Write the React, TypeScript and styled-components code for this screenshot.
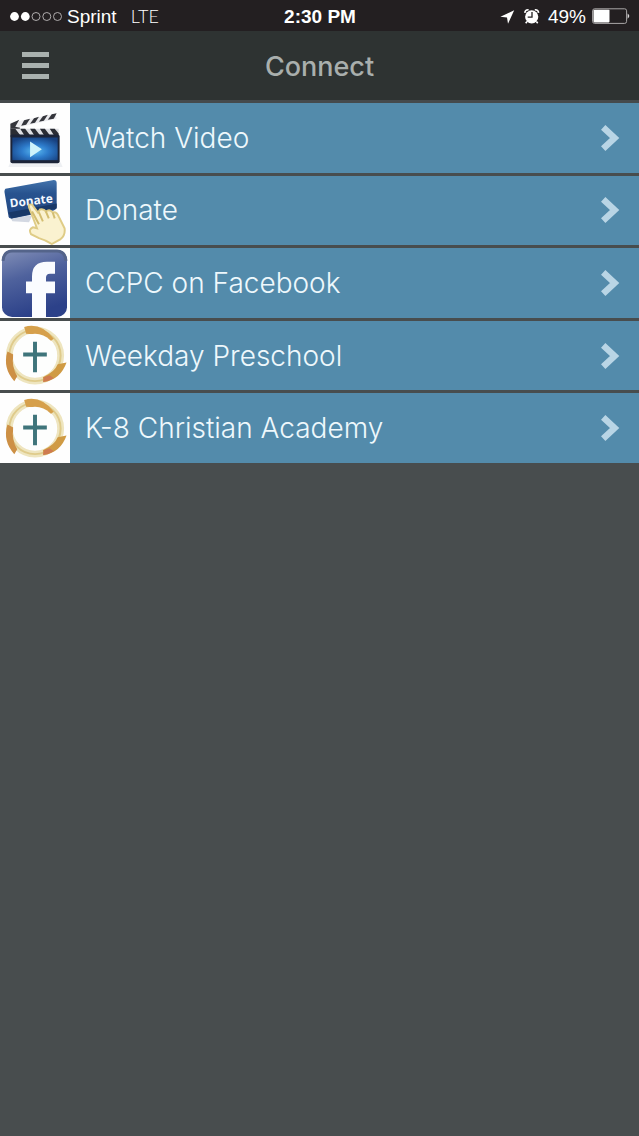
import React from 'react';
import styled, { createGlobalStyle } from 'styled-components';

const GlobalStyle = createGlobalStyle`
  *, *::before, *::after { box-sizing: border-box; }
  body {
    margin: 0;
    background: #484d4e;
    font-family: Inter, "Liberation Sans", sans-serif;
  }
`;

const StatusBar = styled.div`
  display: grid;
  grid-template-columns: 1fr auto 1fr;
  align-items: center;
  height: 31px;
  padding: 2px 9px 0 10px;
  background: #231f21;
  color: #fff;
  font-family: "Liberation Sans", Arial, sans-serif;
  font-size: 19px;
  line-height: 24px;
`;

const StatusGroup = styled.div<{ $end?: boolean }>`
  display: flex;
  align-items: center;
  justify-content: ${(p) => (p.$end ? 'flex-end' : 'flex-start')};
`;

const Carrier = styled.span`
  margin-left: 5px;
`;

const Network = styled.span`
  margin-left: 14px;
  font-family: Lato, "Liberation Sans", sans-serif;
  font-weight: 300;
  font-size: 18px;
  line-height: 20px;
`;

const Clock = styled.time`
  font-weight: 700;
`;

const BatteryLevel = styled.span`
  margin: 0 6px 0 1px;
`;

const NavBar = styled.header`
  display: grid;
  grid-template-columns: 70px 1fr 70px;
  align-items: center;
  height: 72px;
  background: #2e3332;
  border-bottom: 3px solid #454a4c;
`;

const MenuButton = styled.button`
  display: flex;
  justify-content: center;
  padding: 0;
  border: 0;
  background: none;
  cursor: pointer;
`;

const Title = styled.h1`
  margin: 0;
  padding-top: 2px;
  color: #a9afad;
  font-size: 27px;
  line-height: 32px;
  font-weight: 500;
  text-align: center;
`;

const LinkList = styled.ul`
  display: grid;
  grid-auto-rows: 1fr;
  gap: 3px;
  min-height: 360px;
  margin: 0;
  padding: 0;
  list-style: none;
`;

const LinkRow = styled.a`
  display: flex;
  align-items: center;
  height: 100%;
  padding-right: 19px;
  background: #538bab;
  color: #eef8fc;
  font-size: 28px;
  line-height: 32px;
  font-weight: 300;
  text-decoration: none;
`;

const Thumb = styled.span`
  display: flex;
  flex: none;
  align-self: stretch;
  align-items: center;
  width: 70px;
  margin-right: 15px;
  background: #fefefe;

  svg { width: 70px; height: 69px; }
`;

const Label = styled.span`
  flex: 1;
`;

const SignalDots = () => (
  <svg width="52" height="12" viewBox="0 0 52 12" role="img" aria-label="Signal strength">
    <circle cx="4.5" cy="5.5" r="4.4" fill="#fff" />
    <circle cx="15.3" cy="5.5" r="4.4" fill="#fff" />
    {[26, 36.8, 47.5].map((x) => (
      <circle key={x} cx={x} cy="5.5" r="4" fill="none" stroke="#bdbabb" strokeWidth="0.9" />
    ))}
  </svg>
);

const StatusIcons = () => (
  <svg width="47" height="20" viewBox="0 0 47 20" aria-hidden="true">
    <path d="M14.2 3.2 L0.4 9.8 L7 10.4 L8 16.8 Z" fill="#fff" />
    <circle cx="31.7" cy="9.8" r="6.6" fill="#fff" />
    <path d="M24.8 5.9 Q25 2.6 28.6 2.8 M38.6 5.9 Q38.4 2.6 34.8 2.8" fill="none" stroke="#fff" strokeWidth="1.6" />
    <path d="M27 14.5 L25.7 16.2 M36.4 14.5 L37.7 16.2" stroke="#fff" strokeWidth="1.6" />
    <path d="M32 5 V10.2 H27.7" fill="none" stroke="#231f21" strokeWidth="1.3" />
  </svg>
);

const BatteryIcon = () => (
  <svg width="38" height="17" viewBox="0 0 38 17" role="img" aria-label="Battery">
    <rect x="0.6" y="0.8" width="34" height="14.6" rx="2" fill="none" stroke="#aaa7a8" strokeWidth="1" />
    <rect x="1.5" y="1.8" width="16" height="12.6" rx="0.8" fill="#fff" />
    <path d="M35.6 5.4 Q39 8.1 35.6 10.8 Z" fill="#d8d6d7" />
  </svg>
);

const MenuIcon = () => (
  <svg width="27" height="28" viewBox="0 0 27 28" aria-hidden="true">
    <path d="M0 2.500 H27 M0 13.500 H27 M0 24.500 H27" stroke="#a9b1ae" strokeWidth="5" />
  </svg>
);

const Chevron = () => (
  <svg width="20" height="28" viewBox="0 0 20 28" aria-hidden="true">
    <path d="M3.2 3.4 L14.6 14 L3.2 24.600" fill="none" stroke="#b9d5e5" strokeWidth="6.4" />
  </svg>
);

const VideoArt = () => (
  <svg viewBox="0 0 70 70" aria-hidden="true">
    <defs>
      <radialGradient id="screen" cx="50%" cy="60%" r="65%">
        <stop offset="0" stopColor="#5cbcf2" />
        <stop offset="0.45" stopColor="#2d7bcb" />
        <stop offset="1" stopColor="#17407f" />
      </radialGradient>
    </defs>
    <path d="M10 60 H61 L63 65 H8 Z" fill="#eef0f3" />
    <path d="M10 20 L56 11 L57 16 L12 26 Z" fill="#ececef" />
    <g fill="#34353b">
      <path d="M10 21 L19 17 L15 24 L20 25 L18 29 L10 27 Z" />
      <path d="M24 17.500 L30 16 L26 22 L21 23 Z" />
      <path d="M34 15.500 L39 14 L35 20 L30 21 Z" />
      <path d="M43 13.500 L48 12 L44 18 L39 19 Z" />
      <path d="M52 11.500 L57 10.500 L54 16 L48 17 Z" />
    </g>
    <path d="M10 26 H59 V35 H10 Z" fill="#dedfe3" />
    <path d="M10 26 H15 L21 34 H10 Z M20 26 H25 L31 34 H25 Z M30 26 H35 L41 34 H35 Z M40 26 H45 L51 34 H45 Z M50 26 H55 L59 31 V34 H55 Z" fill="#2b2d34" />
    <rect x="10" y="32" width="50" height="29" rx="2" fill="#1c2438" />
    <rect x="12" y="35" width="46" height="23" fill="url(#screen)" />
    <path d="M30 39 L42 47 L30 55 Z" fill="#cdf3fb" />
  </svg>
);

const DonateArt = () => (
  <svg viewBox="0 0 70 70" aria-hidden="true">
    <defs>
      <linearGradient id="card" x1="0" y1="0" x2="0" y2="1">
        <stop offset="0" stopColor="#4374ac" />
        <stop offset="0.35" stopColor="#28538f" />
        <stop offset="1" stopColor="#214681" />
      </linearGradient>
    </defs>
    <path d="M10 42 L32 40 L29 47 L12 46 Z" fill="#d3d8e2" />
    <path d="M5 13 L54 4 Q57 4 57 7 L57 31 Q57 34 54 35 L11 43 Q8 43 8 40 L4 16 Q4 14 5 13 Z" fill="url(#card)" />
    <path d="M8 37 L57 28 L57 33 L11 43 Z" fill="#193867" />
    <text x="10" y="32" transform="rotate(-7 10 32)" fill="#f3f8ff" fontFamily="Open Sans, sans-serif" fontWeight="700" fontSize="12">Donate</text>
    <path d="M29 32 Q28 28 32 29 L38 37 L40 34 Q44 33 46 36 Q50 33 53 37 Q57 36 59 41 L65 53 Q66 60 61 64 L52 69 Q46 65 39 63 L31 59 Q28 54 33 52 L37 53 Z" fill="#faf2d0" stroke="#dfcc86" strokeWidth="2" />
    <path d="M32 36 L39 49 M39 37 L43 46 M46 36 L49 43 M53 37 L55 43" fill="none" stroke="#d3bd70" strokeWidth="2" />
  </svg>
);

const FacebookArt = () => (
  <svg viewBox="0 0 70 70" preserveAspectRatio="none" aria-hidden="true">
    <defs>
      <linearGradient id="tile" x1="0" y1="0" x2="0.3" y2="1">
        <stop offset="0" stopColor="#8390b8" />
        <stop offset="0.45" stopColor="#4f629d" />
        <stop offset="1" stopColor="#2c4189" />
      </linearGradient>
    </defs>
    <rect x="2" y="2" width="65" height="68" rx="10" fill="url(#tile)" />
    <path d="M3 13 Q4 3 12 3 H57 Q65 3 66 13" fill="none" stroke="#54648a" strokeWidth="3" />
    <path d="M32 70 V46 H26 V34 H32 V29 Q32 14 47 14 H55 V26 H50 Q46 26 46 30 V34 H55 V46 H46 V70 Z" fill="#fafcff" />
  </svg>
);

const CrossArt = () => (
  <svg viewBox="0 0 70 70" aria-hidden="true">
    <circle cx="35" cy="35" r="26" fill="none" stroke="#eee5bf" strokeWidth="7" />
    <circle cx="35" cy="35" r="26" fill="none" stroke="#dfcb8b" strokeWidth="2" />
    <path d="M24 6 Q41 1 54 18 L50 21 Q40 13 26 13 Z" fill="#d6a04b" />
    <path d="M7 31 Q2 48 14 61 L17 56 Q11 47 13 34 Z" fill="#cd9045" />
    <path d="M67 42 Q61 59 44 62 L43 57 Q55 52 58 44 Z" fill="#d09b44" />
    <path d="M44 57 L50 55 L54 58 Q49 61 43 62 Z" fill="#cf7b50" />
    <circle cx="35" cy="35" r="22" fill="#fdfefd" />
    <path d="M35 21 V52 M23 34 H47" stroke="#3f757b" strokeWidth="4" />
  </svg>
);

const links = [
  { label: 'Watch Video', href: '#video', Art: VideoArt },
  { label: 'Donate', href: '#donate', Art: DonateArt },
  { label: 'CCPC on Facebook', href: '#facebook', Art: FacebookArt },
  { label: 'Weekday Preschool', href: '#preschool', Art: CrossArt },
  { label: 'K-8 Christian Academy', href: '#academy', Art: CrossArt },
];

export default function App() {
  return (
    <>
      <GlobalStyle />
      <StatusBar>
        <StatusGroup>
          <SignalDots />
          <Carrier>
            Sprint<Network>LTE</Network>
          </Carrier>
        </StatusGroup>
        <Clock>2:30 PM</Clock>
        <StatusGroup $end>
          <StatusIcons />
          <BatteryLevel>49%</BatteryLevel>
          <BatteryIcon />
        </StatusGroup>
      </StatusBar>
      <NavBar>
        <MenuButton type="button" aria-label="Menu">
          <MenuIcon />
        </MenuButton>
        <Title>Connect</Title>
      </NavBar>
      <main>
        <LinkList>
          {links.map(({ label, href, Art }) => (
            <li key={label}>
              <LinkRow href={href}>
                <Thumb>
                  <Art />
                </Thumb>
                <Label>{label}</Label>
                <Chevron />
              </LinkRow>
            </li>
          ))}
        </LinkList>
      </main>
    </>
  );
}
